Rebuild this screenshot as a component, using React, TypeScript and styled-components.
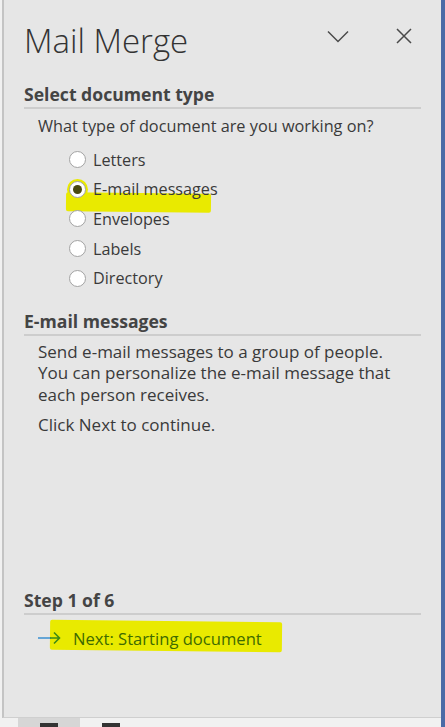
import { FC } from "react";
import styled, { createGlobalStyle } from "styled-components";

const GlobalStyle = createGlobalStyle`
  html, body {
    margin: 0;
    padding: 0;
    background: #e6e6e6;
  }
  body {
    font-family: "Open Sans", "Noto Sans", "Liberation Sans", sans-serif;
    color: #3c3c3c;
  }
`;

const Frame = styled.div`
  width: 445px;
  height: 727px;
  display: flex;
  flex-direction: column;
  box-sizing: border-box;
  border-right: 4px solid #4a6aa6;
  background: #f1f1f1;
`;

const Pane = styled.div`
  flex: 1;
  display: flex;
  flex-direction: column;
  background: #e6e6e6;
  border-left: 2px solid #c4c4c4;
  margin-left: 2px;
  border-bottom: 1px solid #cfcfcf;
  padding: 0 20px 0 20px;
`;

const Header = styled.div`
  display: flex;
  align-items: flex-start;
  height: 82px;
`;

const Title = styled.h1`
  flex: 1;
  margin: 19px 0 0;
  font-weight: 300;
  font-size: 33px;
  line-height: 44px;
  color: #333;
`;

const HeaderActions = styled.div`
  display: flex;
  align-items: center;
  gap: 47px;
  margin: 28px 9px 0 0;
`;

const IconButton = styled.button`
  border: none;
  background: transparent;
  padding: 0;
  display: flex;
  align-items: center;
  justify-content: center;
`;

const SectionHead = styled.div`
  font-weight: 700;
  font-size: 17.6px;
  line-height: 24px;
  color: #444;
  padding-bottom: 1px;
  border-bottom: 2px solid #cdcdcd;
`;

const Body = styled.div`
  padding-left: 14px;
  font-size: 16.3px;
  color: #3a3a3a;
`;

const Question = styled.p`
  margin: 6px 0 8px;
`;

const RadioList = styled.div`
  display: flex;
  flex-direction: column;
  padding-left: 45px;
  margin-bottom: 16px;
`;

const RadioRow = styled.label`
  position: relative;
  display: flex;
  align-items: center;
  height: 29.6px;
  gap: 7px;
  font-size: 16.2px;
  color: #3a3a3a;
`;

const Circle = styled.span<{ $checked?: boolean }>`
  position: relative;
  z-index: 1;
  box-sizing: border-box;
  width: 17px;
  height: 17px;
  border-radius: 50%;
  border: 1.5px solid #a3a3a3;
  background: #fff;
  display: flex;
  align-items: center;
  justify-content: center;
  box-shadow: ${(p) => (p.$checked ? "0 0 0 2px #e9ea00" : "none")};
  &::after {
    content: "";
    display: ${(p) => (p.$checked ? "block" : "none")};
    width: 9px;
    height: 9px;
    border-radius: 50%;
    background: #4a4a10;
  }
`;

const Label = styled.span`
  position: relative;
  z-index: 1;
`;

const Marker = styled.span<{ $w: number; $top: number; $h: number; $left: number }>`
  position: absolute;
  left: ${(p) => p.$left}px;
  top: ${(p) => p.$top}px;
  width: ${(p) => p.$w}px;
  height: ${(p) => p.$h}px;
  background: #e9ea00;
  border-radius: 2px;
  transform: rotate(0.6deg);
`;

const Para = styled.p<{ $top: number }>`
  margin: ${(p) => p.$top}px 0 0;
  font-size: 17px;
  line-height: 21.5px;
`;

const Spacer = styled.div`
  flex: 1;
`;

const NextLink = styled.div`
  position: relative;
  display: flex;
  align-items: center;
  gap: 12px;
  height: 30px;
  margin: 8px 0 64px;
  font-size: 16.6px;
  color: #3e6a00;
`;

const StatusBar = styled.div`
  height: 9px;
  display: flex;
  align-items: flex-end;
  padding-left: 18px;
`;

const StatusTab = styled.div<{ $active?: boolean }>`
  width: 62px;
  height: 9px;
  background: ${(p) => (p.$active ? "#d6d6d6" : "transparent")};
  display: flex;
  justify-content: center;
  &::after {
    content: "";
    margin-top: 5px;
    width: 18px;
    height: 4px;
    background: #333;
  }
`;

const options = ["Letters", "E-mail messages", "Envelopes", "Labels", "Directory"];

const App: FC = () => {
  return (
    <>
      <GlobalStyle />
      <Frame>
        <Pane>
          <Header>
            <Title>Mail Merge</Title>
            <HeaderActions>
              <IconButton aria-label="Options">
                <svg width="22" height="13" viewBox="0 0 22 13">
                  <path d="M1 1.5 L11 11.5 L21 1.5" fill="none" stroke="#4a4a4a" strokeWidth="1.5" />
                </svg>
              </IconButton>
              <IconButton aria-label="Close">
                <svg width="16" height="16" viewBox="0 0 16 16">
                  <path d="M1 1 L15 15 M15 1 L1 15" fill="none" stroke="#4a4a4a" strokeWidth="1.5" />
                </svg>
              </IconButton>
            </HeaderActions>
          </Header>

          <SectionHead>Select document type</SectionHead>
          <Body>
            <Question>What type of document are you working on?</Question>
          </Body>
          <RadioList>
            {options.map((o) => (
              <RadioRow key={o}>
                {o === "E-mail messages" && <Marker $left={-3} $top={18} $w={145} $h={19} />}
                <Circle $checked={o === "E-mail messages"} />
                <Label>{o}</Label>
              </RadioRow>
            ))}
          </RadioList>

          <SectionHead>E-mail messages</SectionHead>
          <Body>
            <Para $top={5}>
              Send e-mail messages to a group of people.
              <br />
              You can personalize the e-mail message that
              <br />
              each person receives.
            </Para>
            <Para $top={9}>Click Next to continue.</Para>
          </Body>

          <Spacer />

          <SectionHead>Step 1 of 6</SectionHead>
          <NextLink>
            <Marker $left={26} $top={-2} $w={232} $h={30} />
            <svg width="37" height="14" viewBox="0 0 37 14" style={{ position: "relative", zIndex: 1 }}>
              <path d="M14 7 H27" stroke="#3a8fd0" strokeWidth="1.5" />
              <path d="M26 7 H35 M30 1.5 L35.5 7 L30 12.5" fill="none" stroke="#3d8a14" strokeWidth="1.6" />
            </svg>
            <Label>Next: Starting document</Label>
          </NextLink>
        </Pane>
        <StatusBar>
          <StatusTab $active />
          <StatusTab />
        </StatusBar>
      </Frame>
    </>
  );
};

export default App;
